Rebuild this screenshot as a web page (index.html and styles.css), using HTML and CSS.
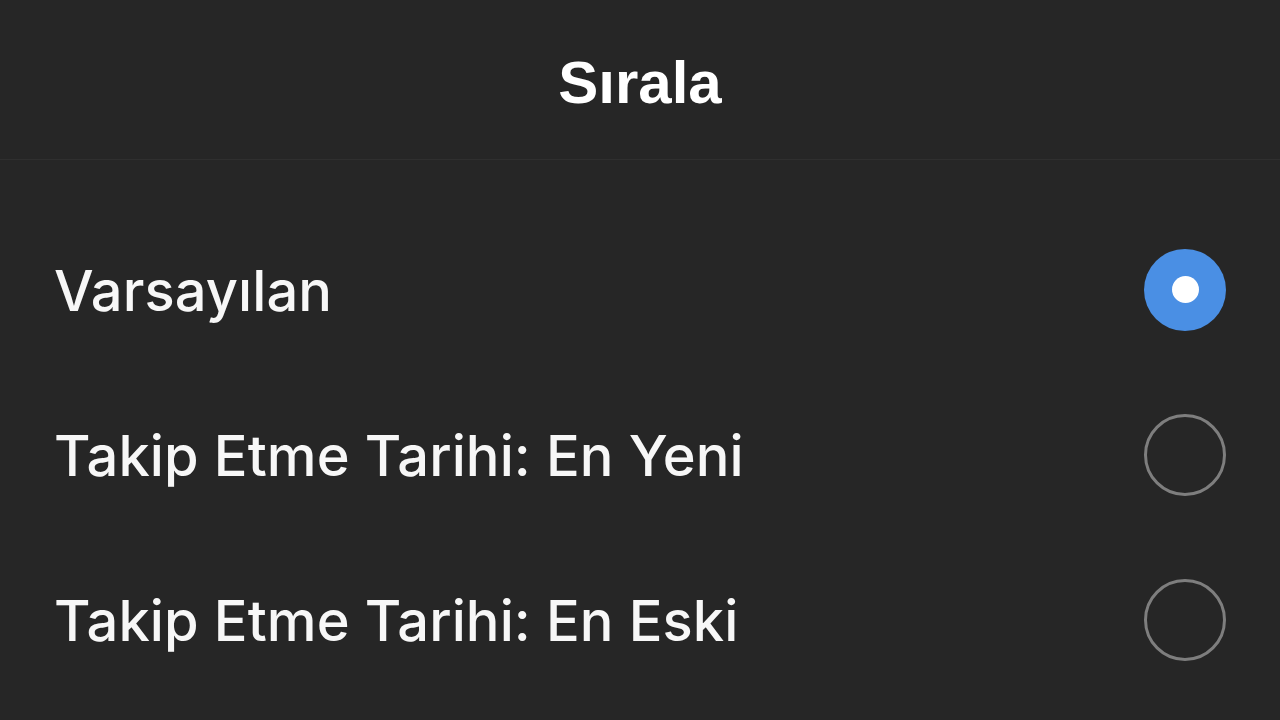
FILE: index.html
```html
<!DOCTYPE html>
<html lang="tr">
<head>
<meta charset="utf-8">
<title>Sırala</title>
<link rel="stylesheet" href="styles.css">
</head>
<body>
<div class="sheet">
  <header class="header">
    <h1 class="title">Sırala</h1>
  </header>
  <ul class="options">
    <li class="option">
      <span class="label">Varsayılan</span>
      <span class="radio radio-on"><span class="dot"></span></span>
    </li>
    <li class="option">
      <span class="label">Takip Etme Tarihi: En Yeni</span>
      <span class="radio"></span>
    </li>
    <li class="option">
      <span class="label">Takip Etme Tarihi: En Eski</span>
      <span class="radio"></span>
    </li>
  </ul>
</div>
</body>
</html>
```
FILE: styles.css
```css
html, body {
  margin: 0;
  padding: 0;
  background: #262626;
}
body {
  width: 1280px;
  height: 720px;
  overflow: hidden;
  font-family: "Liberation Sans", Arial, sans-serif;
  color: #f7f7f7;
}
.sheet {
  display: flex;
  flex-direction: column;
}
.header {
  height: 159px;
  border-bottom: 1px solid #2f2f2f;
  display: flex;
  align-items: center;
  justify-content: center;
  box-sizing: content-box;
}
.title {
  margin: 0;
  padding-top: 6px;
  font-size: 60px;
  font-weight: 700;
  line-height: 1;
  color: #ffffff;
}
.options {
  list-style: none;
  margin: 0;
  padding: 47px 54px 0 54px;
}
.option {
  height: 165px;
  display: flex;
  align-items: center;
  justify-content: space-between;
}
.label {
  font-family: Inter, "Liberation Sans", sans-serif;
  font-size: 56px;
  font-weight: 500;
  letter-spacing: 0.1px;
  line-height: 1;
  padding-top: 2px;
}
.radio {
  width: 76px;
  height: 76px;
  border: 3px solid #7e7e7e;
  border-radius: 50%;
  display: flex;
  align-items: center;
  justify-content: center;
  flex-shrink: 0;
}
.radio-on {
  width: 82px;
  height: 82px;
  border: none;
  background: #4a8fe4;
}
.dot {
  width: 27px;
  height: 27px;
  border-radius: 50%;
  background: #ffffff;
}
```
